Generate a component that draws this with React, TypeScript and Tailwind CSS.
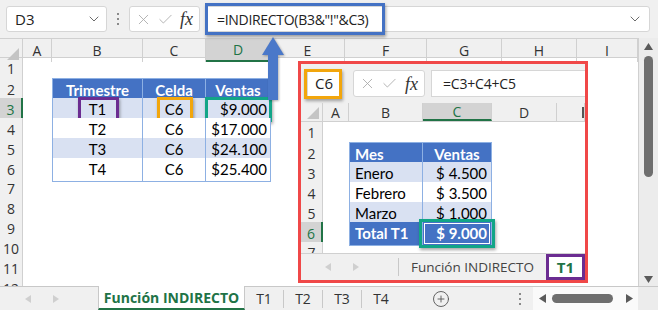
import React from "react";
import { X, Check, ChevronDown, CirclePlus } from "lucide-react";

const ui = "font-['Open_Sans','Noto_Sans',sans-serif]";
const cellFont = "font-['Lato','Liberation_Sans',sans-serif]";

const mainGrid =
  "grid grid-cols-[23px_29px_91px_63px_65px_74px_82px_75px_75px_61px]";
const insetGrid = "grid grid-cols-[22px_26px_74px_69px_65px_28px]";

const mainTable = [
  { cells: ["Trimestre", "Celda", "Ventas"], head: true },
  { cells: ["T1", "C6", "$9.000"], band: true },
  { cells: ["T2", "C6", "$17.000"] },
  { cells: ["T3", "C6", "$24.100"], band: true },
  { cells: ["T4", "C6", "$25.400"] },
];

const insetTable = [
  { cells: ["Mes", "Ventas"], head: true },
  { cells: ["Enero", "$ 4.500"], band: true },
  { cells: ["Febrero", "$ 3.500"] },
  { cells: ["Marzo", "$ 1.000"], band: true },
  { cells: ["Total T1", "$ 9.000"], total: true },
];

const Corner = () => (
  <svg className="absolute right-[3px] bottom-[2px]" width="12" height="12">
    <polygon points="12,0 12,12 0,12" fill="#c4c4c4" />
  </svg>
);

const Tri = ({ dir, color = "#c8c8c8", size = 8 }: { dir: "l" | "r"; color?: string; size?: number }) => (
  <svg className="shrink-0 block" width={size} height={size} viewBox="0 0 8 8">
    <polygon points={dir === "l" ? "7,0 7,8 1,4" : "1,0 1,8 7,4"} fill={color} />
  </svg>
);

const Dots = () => (
  <div className="flex flex-col gap-[3px]">
    <div className="w-[2px] h-[2px] bg-[#8a8a8a]" />
    <div className="w-[2px] h-[2px] bg-[#8a8a8a]" />
    <div className="w-[2px] h-[2px] bg-[#8a8a8a]" />
  </div>
);

const FxBox = ({ className }: { className: string }) => (
  <div className={`flex items-center bg-white border border-[#d6d6d6] rounded-[3px] ${className}`}>
    <X size={17} strokeWidth={1.2} className="text-[#a8a8a8] ml-[5px]" />
    <Check size={17} strokeWidth={1.2} className="text-[#a8a8a8] ml-[5px]" />
    <span className="ml-auto mr-[6px] font-['Liberation_Serif',serif] italic text-[18px] text-[#333] leading-none">
      fx
    </span>
  </div>
);

const Highlight = ({ color, className }: { color: string; className: string }) => (
  <div
    className={`absolute border-[3px] shadow-[1px_2px_3px_rgba(0,0,0,0.35)] pointer-events-none ${className}`}
    style={{ borderColor: color }}
  />
);

// scrollbars drawn as small svgs
const VScroll = () => (
  <svg className="block shrink-0" width="20" height="248" viewBox="0 0 20 248">
    <rect x="0" y="0" width="20" height="248" fill="#ececec" />
    <rect x="0" y="0" width="1" height="248" fill="#d0d0d0" />
    <polygon points="6,12 15,12 10.5,5" fill="#5a5a5a" />
    <rect x="6" y="18" width="9" height="121" rx="4.5" fill="#6e6e6e" />
    <polygon points="6,238 15,238 10.5,245" fill="#5a5a5a" />
  </svg>
);

const HScroll = () => (
  <svg className="block shrink-0" width="105" height="23" viewBox="0 0 105 23">
    <rect x="0" y="0" width="105" height="23" fill="#fafafa" />
    <polygon points="13,7 13,16 6,11.5" fill="#5a5a5a" />
    <rect x="19" y="7" width="61" height="9" rx="4.5" fill="#6e6e6e" />
    <polygon points="93,7 93,16 100,11.5" fill="#5a5a5a" />
  </svg>
);

const Inset = () => (
  <div className="absolute left-[298px] top-[61px] w-[290px] h-[222px] border-[3px] border-[#f04848] bg-white flex flex-col overflow-hidden">
    {/* formula bar */}
    <div className="h-[39px] shrink-0 bg-[#f0f0f0] flex items-start pt-[6px]">
      <div className="relative ml-[6px] w-[33px] h-[27px] bg-white border border-[#d6d6d6] flex items-center pl-[7px] text-[15px] text-[#222]">
        C6
        <Highlight color="#f2a60c" className="-left-[4px] -right-[3px] -top-[2px] -bottom-[3px]" />
      </div>
      <FxBox className="ml-[13px] w-[72px] h-[27px]" />
      <div className="ml-[6px] flex-1 h-[27px] bg-white border border-[#d6d6d6] border-r-0 flex items-center pl-[11px] text-[14px] tracking-[-0.2px] text-[#222]">
        =C3+C4+C5
      </div>
    </div>
    {/* column headers */}
    <div className={`${insetGrid} h-[19px] shrink-0 bg-[#f0f0f0] border-b border-[#d0d0d0] text-[14px]`}>
      <div className="relative border-r border-[#d0d0d0]">
        <Corner />
      </div>
      {["A", "B", "C", "D", "E"].map((c) => (
        <div
          key={c}
          className={`flex items-center justify-center border-r border-[#d0d0d0] overflow-hidden ${
            c === "C" ? "bg-[#d3d3d3] text-[#217346] border-b-2 border-b-[#217346]" : "text-[#333]"
          } ${c === "E" ? "justify-end" : ""}`}
        >
          {c === "E" ? <span className="w-[2px] h-[11px] bg-[#555]" /> : c}
        </div>
      ))}
    </div>
    {/* rows */}
    <div className="flex-1 overflow-hidden">
      {[1, 2, 3, 4, 5, 6, 7].map((r) => {
        const t = r >= 2 && r <= 6 ? insetTable[r - 2] : null;
        return (
          <div key={r} className={`${insetGrid} h-[20px]`}>
            <div
              className={`flex items-center justify-center border-b border-r text-[14px] ${
                r === 6
                  ? "bg-[#d3d3d3] text-[#217346] border-r-2 border-r-[#217346] border-b-[#d0d0d0]"
                  : "bg-[#f0f0f0] text-[#333] border-[#d0d0d0]"
              }`}
            >
              {r}
            </div>
            <div />
            {t
              ? t.cells.map((v, i) => {
                  const strong = t.head || t.total;
                  const bg = strong ? "bg-[#4472c4]" : t.band ? "bg-[#d9e1f2]" : "bg-white";
                  return (
                    <div
                      key={i}
                      className={`relative flex items-center ${cellFont} text-[15px] border-r border-b ${
                        i === 0 ? "border-l" : ""
                      } ${t.head ? "border-t" : ""} border-[#8db0e3] ${bg} ${
                        strong ? "text-white font-bold" : "text-black"
                      } ${i === 0 ? "pl-[5px]" : t.head ? "justify-center" : "justify-end pr-[4px]"}`}
                    >
                      {v}
                      {t.total && i === 1 && (
                        <>
                          <div className="absolute inset-[1px] border border-white pointer-events-none" />
                          <Highlight color="#12a587" className="-left-[4px] -right-[4px] -top-[3px] -bottom-[3px]" />
                        </>
                      )}
                    </div>
                  );
                })
              : [<div key="b" />, <div key="c" />]}
            <div />
            <div />
          </div>
        );
      })}
    </div>
    {/* sheet tabs */}
    <div className={`h-[27px] shrink-0 bg-[#f0f0f0] border-t border-[#d0d0d0] flex items-stretch ${ui}`}>
      <div className="w-[98px] flex items-center gap-[20px] pl-[23px] border-r border-[#c8c8c8] my-[4px]">
        <Tri dir="l" color="#cfcfcf" />
        <Tri dir="r" color="#cfcfcf" />
      </div>
      <div className="w-[147px] flex items-center justify-center text-[13.5px] text-[#444]">Función INDIRECTO</div>
      <div className="relative flex-1 flex items-center justify-center bg-white text-[15px] font-bold text-[#217346]">
        T1
        <div className="absolute inset-0 border-[3px] border-[#6b2c91]" />
      </div>
    </div>
  </div>
);

export default function App() {
  return (
    <div className={`relative w-[658px] h-[310px] overflow-hidden bg-white ${ui}`}>
      {/* formula bar */}
      <div className="h-[38px] bg-[#f0f0f0] flex items-start pt-[6px]">
        <div className="ml-[6px] w-[101px] h-[26px] bg-white border border-[#d6d6d6] rounded-[3px] flex items-center pl-[8px] pr-[4px] text-[15px] text-[#222]">
          D3
          <ChevronDown size={16} strokeWidth={1.3} className="ml-auto text-[#555]" />
        </div>
        <div className="w-[22px] h-[26px] flex items-center justify-center">
          <Dots />
        </div>
        <FxBox className="w-[71px] h-[26px]" />
        <div className="relative ml-[5px] w-[445px] h-[26px] bg-white border border-[#d6d6d6] rounded-[3px] flex items-center pl-[11px] pr-[6px] text-[14px] tracking-[-0.3px] text-[#222]">
          =INDIRECTO(B3&amp;"!"&amp;C3)
          <ChevronDown size={16} strokeWidth={1.3} className="ml-auto text-[#555]" />
          <div className="absolute -left-[1px] -top-[4px] w-[180px] h-[32px] border-[3px] border-[#4472c4] shadow-[1px_2px_3px_rgba(0,0,0,0.35)]" />
        </div>
      </div>

      {/* grid + vertical scrollbar */}
      <div className="flex h-[248px]">
        <div className="w-[638px] shrink-0 overflow-hidden">
          <div className={`${mainGrid} h-[20px] bg-[#f0f0f0] border-y border-[#d0d0d0] text-[14px]`}>
            <div className="relative border-r border-[#d0d0d0]">
              <Corner />
            </div>
            {["A", "B", "C", "D", "E", "F", "G", "H", "I"].map((c) => (
              <div
                key={c}
                className={`flex items-center justify-center border-r border-[#d0d0d0] ${
                  c === "D" ? "bg-[#d3d3d3] text-[#217346] border-b-2 border-b-[#217346]" : "text-[#333]"
                }`}
              >
                {c}
              </div>
            ))}
          </div>
          {[1, 2, 3, 4, 5, 6, 7, 8, 9, 10, 11, 12].map((r) => {
            const t = r >= 2 && r <= 6 ? mainTable[r - 2] : null;
            return (
              <div key={r} className={`${mainGrid} h-[20px]`}>
                <div
                  className={`flex items-center justify-center border-b border-r text-[14px] ${
                    r === 3
                      ? "bg-[#d3d3d3] text-[#217346] border-r-2 border-r-[#217346] border-b-[#d0d0d0]"
                      : "bg-[#f0f0f0] text-[#333] border-[#d0d0d0]"
                  }`}
                >
                  {r}
                </div>
                <div />
                {t
                  ? t.cells.map((v, i) => {
                      const bg = t.head ? "bg-[#4472c4]" : t.band ? "bg-[#d9e1f2]" : "bg-white";
                      return (
                        <div
                          key={i}
                          className={`relative flex items-center ${cellFont} text-[15px] border-r border-b ${
                            i === 0 ? "border-l" : ""
                          } ${t.head ? "border-t" : ""} border-[#8db0e3] ${bg} ${
                            t.head ? "text-white font-bold" : "text-black"
                          } ${i === 2 && !t.head ? "justify-end pr-[3px]" : "justify-center"}`}
                        >
                          {v}
                          {r === 3 && i === 0 && (
                            <Highlight color="#6b2c91" className="left-[25px] w-[41px] -top-[1px] -bottom-[1px]" />
                          )}
                          {r === 3 && i === 1 && (
                            <Highlight color="#f2a60c" className="left-[14px] w-[36px] -top-[1px] -bottom-[1px]" />
                          )}
                          {r === 3 && i === 2 && (
                            <Highlight color="#12a587" className="-left-[1px] -right-[2px] -top-[1px] -bottom-[1px]" />
                          )}
                        </div>
                      );
                    })
                  : [<div key="b" />, <div key="c" />, <div key="d" />]}
                <div />
                <div />
                <div />
                <div />
                <div />
              </div>
            );
          })}
        </div>
        <VScroll />
      </div>

      {/* sheet tabs */}
      <div className="flex h-[24px] bg-[#f0f0f0] border-t border-[#c8c8c8]">
        <div className="w-[98px] shrink-0 flex items-center gap-[20px] pl-[24px]">
          <Tri dir="l" color="#cfcfcf" />
          <Tri dir="r" color="#cfcfcf" />
        </div>
        <div className="w-[147px] shrink-0 -mt-[1px] flex items-center justify-center bg-white border-x border-[#c8c8c8] border-b-2 border-b-[#217346] text-[14px] font-bold text-[#217346]">
          Función INDIRECTO
        </div>
        <div className="w-[155px] shrink-0 flex items-center">
          {["T1", "T2", "T3", "T4"].map((s, i) => (
            <React.Fragment key={s}>
              <div className="w-[38px] flex items-center justify-center text-[14px] text-[#333]">{s}</div>
              {i < 3 && <div className="w-[1px] h-[18px] bg-[#c8c8c8]" />}
            </React.Fragment>
          ))}
        </div>
        <div className="w-[107px] shrink-0 flex items-center pl-[32px]">
          <CirclePlus size={18} strokeWidth={1.2} className="text-[#555]" />
        </div>
        <div className="w-[26px] shrink-0 flex items-center justify-center">
          <Dots />
        </div>
        <HScroll />
        <div className="flex-1 bg-[#ececec]" />
      </div>

      {/* arrow from D3 to formula */}
      <svg className="absolute left-[258px] top-[34px] drop-shadow-[1px_1px_1px_rgba(0,0,0,0.3)]" width="30" height="68">
        <polygon points="15,3 4,21 26,21" fill="#4a78c9" />
        <rect x="10" y="20" width="10" height="46" fill="#4a78c9" />
      </svg>

      <Inset />
    </div>
  );
}
